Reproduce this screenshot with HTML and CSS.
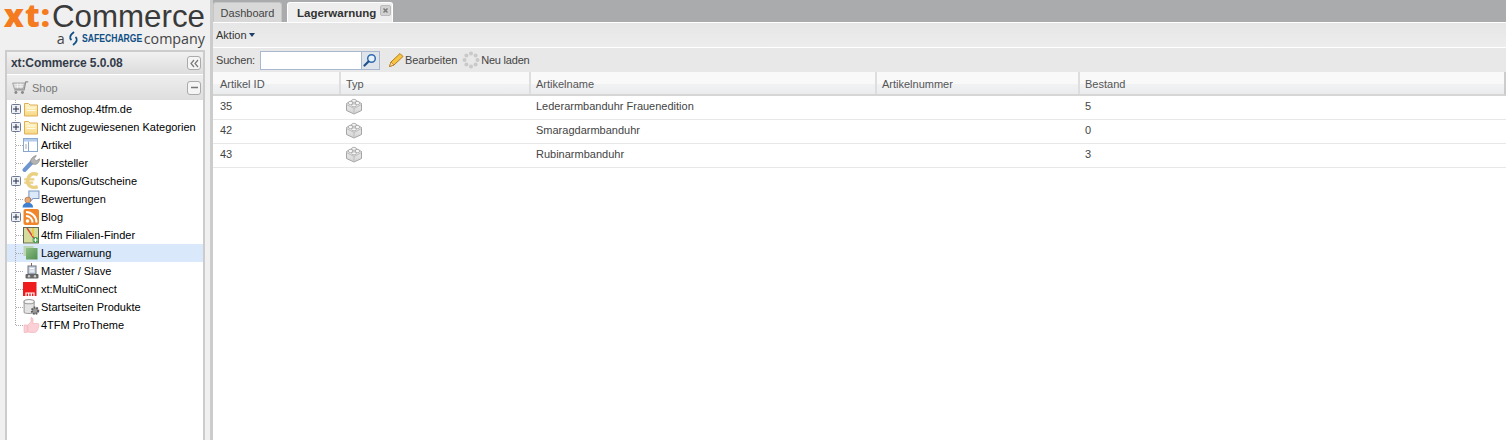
FILE: index.html
```html
<!DOCTYPE html>
<html lang="de">
<head>
<meta charset="utf-8">
<title>xt:Commerce</title>
<link rel="stylesheet" href="styles.css">
</head>
<body>
<svg class="defs" width="0" height="0">
  <defs>
    <linearGradient id="fold" x1="0" y1="0" x2="0" y2="1"><stop offset="0" stop-color="#fff6cc"/><stop offset="1" stop-color="#f6d884"/></linearGradient>
    <linearGradient id="bk" x1="0" y1="0" x2="0" y2="1"><stop offset="0" stop-color="#f4f4f4"/><stop offset="1" stop-color="#d4d4d4"/></linearGradient>
    <linearGradient id="lg" x1="0" y1="0" x2="1" y2="1"><stop offset="0" stop-color="#8fc084"/><stop offset="1" stop-color="#4f8f50"/></linearGradient>
    <symbol id="folder" viewBox="-1 -1 18 18"><path d="M1.500 2.500h4l1.500 1.500h7.500v11h-13z" fill="url(#fold)" stroke="#dfae57"/><path d="M3.500 7h9M3.500 9.500h9" stroke="#fffbe8" stroke-width="1.200"/></symbol>
    <symbol id="brick" viewBox="0 0 18 18"><path d="M1.500 6.500 9 2.500l7.500 4v7L9 17l-7.500-3.500z" fill="url(#bk)" stroke="#a5a5a5"/><path d="M1.500 7.500 9 11.500l7.500-4M9 11.500V17" fill="none" stroke="#bcbcbc"/><ellipse cx="5.500" cy="6" rx="2.300" ry="1.600" fill="#f8f8f8" stroke="#a5a5a5" stroke-width=".8"/><ellipse cx="12.500" cy="6" rx="2.300" ry="1.600" fill="#f8f8f8" stroke="#a5a5a5" stroke-width=".8"/><ellipse cx="9" cy="3.800" rx="2.300" ry="1.500" fill="#f8f8f8" stroke="#a5a5a5" stroke-width=".8"/><ellipse cx="9" cy="8.300" rx="2.300" ry="1.500" fill="#f8f8f8" stroke="#a5a5a5" stroke-width=".8"/></symbol>
    <symbol id="plus" viewBox="0 0 10 10"><rect x=".5" y=".5" width="9" height="9" rx="1" fill="#eef0f6" stroke="#6d7a92"/><path d="M2 5h6M5 2v6" stroke="#23304a"/></symbol>
  </defs>
</svg>
<div class="app">
  <aside class="side">
    <div class="logo">
      <div class="logo-main"><span class="logo-xt">xt:</span>Commerce</div>
      <div class="logo-sub">a
        <svg class="logo-swirl" width="11" height="15" viewBox="0 0 11 15"><path d="M6 1C2 4 1 7 3.500 9M5 14c4-3 5-6 2.500-8" fill="none" stroke="#0f4f86" stroke-width="1.800"/></svg>
        <span class="logo-safe">SAFECHARGE</span> company</div>
    </div>
    <div class="panel">
      <div class="panel-head">
        <span class="panel-title">xt:Commerce 5.0.08</span>
        <span class="mini-btn">
          <svg width="9" height="9" viewBox="0 0 9 9"><path d="M4 1 1 4.500 4 8M8 1 5 4.500 8 8" fill="none" stroke="#777" stroke-width="1.200"/></svg>
        </span>
      </div>
      <div class="shop-head">
        <svg class="shop-cart" width="18" height="15" viewBox="0 0 22 18"><path d="M21 2h-3l-2 10H4" fill="none" stroke="#8f8f8f" stroke-width="1.500"/><path d="M17 3.500H2l2 7h11z" fill="#d4d4d4" stroke="#9a9a9a"/><path d="M4 5.500h11M5 8h10M8 4v6M12 4v6" stroke="#f2f2f2"/><circle cx="6" cy="15" r="1.800" fill="#888"/><circle cx="14" cy="15" r="1.800" fill="#888"/></svg>
        <span class="shop-title">Shop</span>
        <span class="mini-btn"><svg width="9" height="9" viewBox="0 0 9 9"><path d="M1 4.500h7" stroke="#777" stroke-width="1.500"/></svg></span>
      </div>
      <ul class="tree">
        <li class="node"><svg class="exp"><use href="#plus"/></svg><svg class="ico"><use href="#folder"/></svg><span>demoshop.4tfm.de</span></li>
        <li class="node"><svg class="exp"><use href="#plus"/></svg><svg class="ico"><use href="#folder"/></svg><span>Nicht zugewiesenen Kategorien</span></li>
        <li class="node leaf"><svg class="ico" viewBox="-1 -1 18 18"><rect x=".5" y="1.500" width="14" height="13" fill="#fff" stroke="#8aa7cd"/><rect x="1" y="2" width="13" height="2.500" fill="#b4cceb"/><path d="M5.500 4.500v10" stroke="#8aa7cd"/><path d="M3 7v5" stroke="#aaa"/></svg><span>Artikel</span></li>
        <li class="node leaf"><svg class="ico" viewBox="-.5 -.5 17 17"><path d="M2 14.500 9 7" stroke="#6f95cf" stroke-width="4" stroke-linecap="round"/><path d="M8 8c-1-3 1-6 5-7l-2 3 2 2 3-2c0 4-3 6-6 5z" fill="#b5b5b5" stroke="#858585" stroke-width=".7"/></svg><span>Hersteller</span></li>
        <li class="node"><svg class="exp"><use href="#plus"/></svg><svg class="ico" viewBox="0 0 16 16"><path d="M14 2.500C9 0 5.500 3 5 8c-.3 4 3.500 7 9 5" fill="none" stroke="#ead083" stroke-width="3"/><path d="M2 6.500h9M2 9.500h8" stroke="#ead083" stroke-width="2"/></svg><span>Kupons/Gutscheine</span></li>
        <li class="node leaf"><svg class="ico" viewBox="-.5 -.5 17 17"><path d="M6 .5h9.500v7H10L7.500 10V7.500H6z" fill="#dce9f8" stroke="#7b9ac4"/><circle cx="5" cy="9" r="2.800" fill="#e8a873" stroke="#a56a3c" stroke-width=".6"/><path d="M0 16c0-3 2-4.500 5-4.500s5 1.500 5 4.500z" fill="#3f7fd0"/></svg><span>Bewertungen</span></li>
        <li class="node"><svg class="exp"><use href="#plus"/></svg><svg class="ico" viewBox="-1 -1 18 18"><rect x=".5" width="15.500" height="16" rx="2" fill="#f0862b"/><circle cx="4.500" cy="12" r="1.800" fill="#fff"/><path d="M3 7a6.500 6.500 0 0 1 6.500 6.500M3 3a10.500 10.500 0 0 1 10.500 10.500" fill="none" stroke="#fff" stroke-width="2"/></svg><span>Blog</span></li>
        <li class="node leaf"><svg class="ico" viewBox="-1 -1 18 18"><rect x=".5" y=".5" width="15" height="15.500" fill="#d6dd9c" stroke="#5f6a52"/><path d="M4 1 12 13" stroke="#d9483a" stroke-width="1.500"/><path d="M10 1v8" stroke="#e9c84f" stroke-width="2"/><circle cx="12.500" cy="13" r="3" fill="#49a34e"/><path d="M10.500 13h4M12.500 11v4" stroke="#fff"/></svg><span>4tfm Filialen-Finder</span></li>
        <li class="node leaf selected"><svg class="ico" viewBox="-1 -1 18 18"><rect x=".5" y="1" width="10" height="10" fill="#bcd5b4"/><rect x="3" y="3" width="11.500" height="11.500" fill="url(#lg)"/></svg><span>Lagerwarnung</span></li>
        <li class="node leaf"><svg class="ico" viewBox="-1 -1 18 18"><path d="M8.500 0v4" stroke="#a85a4c"/><rect x="5" y="3" width="8" height="8" fill="#cdd6e2" stroke="#6d7280"/><path d="M7 5.500h4M7 8h4" stroke="#fff"/><rect x="2.500" y="11" width="13" height="4.500" rx="1" fill="#666"/><circle cx="6" cy="13.200" r="1.200" fill="#ccc"/><circle cx="12" cy="13.200" r="1.200" fill="#ccc"/></svg><span>Master / Slave</span></li>
        <li class="node leaf"><svg class="ico" viewBox="-1 -1 18 18"><rect y="1" width="13.500" height="14" fill="#ee1c1c"/><path d="M3 15v-3h8v3M5.700 12v3M8.300 12v3" fill="none" stroke="#fff" stroke-width="1.200"/></svg><span>xt:MultiConnect</span></li>
        <li class="node leaf"><svg class="ico" viewBox="-.5 -.5 17 17"><path d="M1.500 3v10c0 1.500 9.500 1.500 9.500 0V3z" fill="#e3e3e3" stroke="#9b9b9b"/><ellipse cx="6.200" cy="3" rx="4.800" ry="2" fill="#f6f6f6" stroke="#9b9b9b"/><circle cx="11.800" cy="11.500" r="3" fill="#9a9a9a" stroke="#5c5c5c" stroke-width="2" stroke-dasharray="1.500 1"/></svg><span>Startseiten Produkte</span></li>
        <li class="node leaf"><svg class="ico" viewBox="-.5 -.5 17 17"><path d="M1.500 8h3v7h-3zM5 8l3-3V1c2 0 2.500 2 1.500 5.500h4.500c2 0 1.500 2 1 2.500.5 1 0 2-.5 2.500 0 1-.5 2-1 2-.5 1-1 1.500-2 1.500H7.500L5 14.500z" fill="#fbd0d6" stroke="#f1b4bd" stroke-width=".7"/></svg><span>4TFM ProTheme</span></li>
      </ul>
    </div>
  </aside>
  <main class="main">
    <div class="tabs">
      <div class="tab">Dashboard</div>
      <div class="tab tab-active">Lagerwarnung
        <span class="tab-close"><svg width="9" height="9" viewBox="0 0 9 9"><path d="M2.500 2.500l4 4M6.500 2.500l-4 4" stroke="#7a7a7a" stroke-width="1.500"/></svg></span>
      </div>
    </div>
    <div class="bar bar-action"><span class="action">Aktion</span><span class="caret"></span></div>
    <div class="bar bar-search">
      <label class="search-label" for="q">Suchen:</label>
      <span class="search">
        <input id="q" class="search-input" type="text">
        <span class="search-btn"><svg width="14" height="14" viewBox="0 0 14 14"><circle cx="8.500" cy="5.500" r="3.800" fill="#e9f2fb" stroke="#2f6cb0" stroke-width="1.500"/><path d="M5.500 8.500 1.500 12.500" stroke="#1f4f8a" stroke-width="2.200" stroke-linecap="round"/></svg></span>
      </span>
      <span class="tool tool-edit"><svg width="16" height="16" viewBox="0 0 16 16"><path d="M3 10 12 1.500l3 3L6 13l-4.500 1.500z" fill="#f5c542" stroke="#b97a1d"/><path d="M1.500 14.500 3 10l3 3z" fill="#f3d9ae" stroke="#b97a1d" stroke-width=".7"/></svg><span>Bearbeiten</span></span>
      <span class="tool tool-reload"><svg width="18" height="18" viewBox="0 0 18 18" fill="#c9c9c9"><circle cx="9" cy="2.500" r="2"/><circle cx="13.600" cy="4.400" r="2"/><circle cx="15.500" cy="9" r="2"/><circle cx="13.600" cy="13.600" r="2"/><circle cx="9" cy="15.500" r="2"/><circle cx="4.400" cy="13.600" r="2"/><circle cx="2.500" cy="9" r="2"/><circle cx="4.400" cy="4.400" r="2"/></svg><span>Neu laden</span></span>
    </div>
    <div class="grid">
      <div class="row head">
        <div class="cell">Artikel ID</div><div class="cell">Typ</div><div class="cell">Artikelname</div><div class="cell">Artikelnummer</div><div class="cell">Bestand</div>
      </div>
      <div class="row">
        <div class="cell">35</div><div class="cell"><svg class="brick"><use href="#brick"/></svg></div><div class="cell">Lederarmbanduhr Frauenedition</div><div class="cell"></div><div class="cell">5</div>
      </div>
      <div class="row">
        <div class="cell">42</div><div class="cell"><svg class="brick"><use href="#brick"/></svg></div><div class="cell">Smaragdarmbanduhr</div><div class="cell"></div><div class="cell">0</div>
      </div>
      <div class="row">
        <div class="cell">43</div><div class="cell"><svg class="brick"><use href="#brick"/></svg></div><div class="cell">Rubinarmbanduhr</div><div class="cell"></div><div class="cell">3</div>
      </div>
    </div>
  </main>
</div>
</body>
</html>
```
FILE: styles.css
```css
* { box-sizing: border-box; }
html, body { margin: 0; height: 100%; overflow: hidden; }
body { font-family: "Liberation Sans", Arial, sans-serif; font-size: 11px; color: #333; background: #fff; }
.defs { display: block; height: 0; }
.app { display: flex; height: 440px; }

/* sidebar */
.side { width: 213px; flex: none; display: flex; flex-direction: column; background: #f0f0f0; padding: 0 5px; border-right: 3px solid #ccc; }
.logo { height: 50px; flex: none; width: 200px; white-space: nowrap; }
.logo-main { display: flex; justify-content: flex-end; align-items: baseline; font-size: 31.300px; line-height: 30px; height: 31px; color: #3a3a3a; }
.logo-xt { font-family: "Open Sans", sans-serif; font-size: 32px; color: #f47b20; font-weight: 800; letter-spacing: 1px; margin-right: 1px; }
.logo-sub { display: flex; justify-content: flex-end; align-items: center; gap: 3px; font-family: "Open Sans", sans-serif; font-size: 14.300px; line-height: 15px; color: #444; }
.logo-safe { display: inline-block; width: 59px; transform: scaleX(.82); transform-origin: left center; color: #0f4f86; font-family: "Liberation Sans", sans-serif; font-weight: 700; font-size: 10.500px; }
.panel { flex: 1; display: flex; flex-direction: column; border: 2px solid #ccc; border-bottom: 0; background: #fff; width: 200px; }
.panel-head { height: 23px; flex: none; display: flex; align-items: center; justify-content: space-between; padding: 0 2px 0 4px; background: linear-gradient(#f1f1f1, #dcdcdc); border-bottom: 1px solid #fff; }
.panel-title { font-weight: 700; font-size: 12px; letter-spacing: -.1px; color: #333c4a; }
.mini-btn { width: 14px; height: 14px; display: flex; align-items: center; justify-content: center; border: 1px solid #aaa; border-radius: 3px; background: #f5f5f5; }
.shop-head { height: 25px; flex: none; display: flex; align-items: center; padding: 0 2px 0 4px; background: linear-gradient(#eeeeee, #dedede); }
.shop-cart { flex: none; }
.shop-title { flex: 1; margin-left: 3px; color: #777; font-size: 11px; }
.tree { list-style: none; margin: 0; padding: 0; flex: 1; }
.node { height: 18px; display: flex; align-items: center; padding-left: 4px; color: #000; font-size: 11px; white-space: nowrap; background-image: repeating-linear-gradient(#aaa 0 1px, transparent 1px 2px); background-size: 1px 18px; background-position: 8px 0; background-repeat: no-repeat; }
.node span { margin-left: 1px; }
.exp { width: 10px; height: 10px; flex: none; margin-right: 1px; }
.ico { width: 18px; height: 18px; flex: none; }
.leaf { padding-left: 15px; background-image: repeating-linear-gradient(#aaa 0 1px, transparent 1px 2px), repeating-linear-gradient(90deg, #aaa 0 1px, transparent 1px 2px); background-size: 1px 18px, 7px 1px; background-position: 8px 0, 9px 9px; }
.leaf:last-child { background-size: 1px 10px, 7px 1px; }
.selected { background-color: #d9e8fb; }

/* main */
.main { flex: 1; min-width: 0; display: flex; flex-direction: column; }
.tabs { height: 23px; flex: none; display: flex; gap: 5px; background: #a9abad; border-bottom: 1px solid #fff; align-items: flex-end; }
.tab { height: 20px; width: 69px; display: flex; align-items: center; justify-content: center; background: #d8d8d8; border-radius: 3px 3px 0 0; border: 1px solid #c6c6c6; border-bottom: 0; color: #444; font-size: 11px; }
.tab-active { width: 106px; background: #eeeeee; border: 1px solid #fff; border-bottom: 0; font-size: 11.500px; font-weight: 700; color: #333; justify-content: flex-start; padding-left: 9px; gap: 4px; }
.tab-close { width: 11px; height: 11px; display: flex; align-items: center; justify-content: center; background: #d2d2d2; border: 1px solid #bbb; border-radius: 2px; margin-bottom: 4px; }
.bar { flex: none; display: flex; align-items: center; padding-left: 3px; color: #444; }
.bar-action { height: 25px; background: linear-gradient(#e6e6e6, #ededed); border-bottom: 1px solid #fff; }
.bar-search { height: 24px; background: #e8e8e8; }
.action { font-size: 11px; color: #333; }
.caret { margin-left: 2px; border: 3px solid transparent; border-top: 4px solid #1d3f66; border-bottom: 0; }
.search-label { font-size: 11px; letter-spacing: -.2px; }
.search { display: flex; margin-left: 5px; width: 120px; height: 19px; }
.search-input { flex: 1; min-width: 0; height: 19px; border: 1px solid #a9b8cf; background: #fff; padding: 0; outline: 0; }
.search-btn { width: 18px; height: 19px; flex: none; display: flex; align-items: center; justify-content: center; background: #dfe3ea; border: 1px solid #a9b8cf; border-left: 0; }
.tool { display: inline-flex; align-items: center; gap: 1px; font-size: 11px; color: #444; letter-spacing: -.1px; }
.tool-edit { margin-left: 8px; }
.tool-reload { margin-left: 5px; letter-spacing: -.2px; }
.grid { flex: 1; }
.row { display: grid; grid-template-columns: 126px 190px 346px 203px 428px; height: 24px; border-bottom: 1px solid #e8e8e8; align-items: center; color: #444; }
.cell { padding: 0 0 3px 7px; height: 100%; display: flex; align-items: center; font-size: 11px; }
.head { background: linear-gradient(#f9f9f9 0 12px, #f1f2f4 12px, #ebecee); border-bottom: 2px solid #d6d6d6; border-right: 2px solid #ccc; }
.head .cell { border-left: 2px solid #dedede; color: #555; padding: 1px 0 0 5px; }
.head .cell:first-child { border-left: 0; padding-left: 7px; }
.brick { width: 18px; height: 18px; margin-left: -1px; }
```
